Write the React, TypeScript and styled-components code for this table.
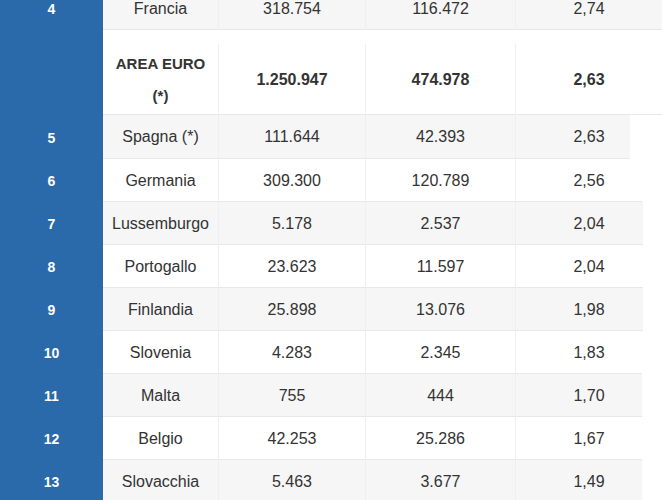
import React from 'react'
import styled, { createGlobalStyle } from 'styled-components'

const GlobalStyle = createGlobalStyle`
    html, body {
        margin: 0;
        padding: 0;
        background: #fff;
        overflow: hidden;
    }
    body {
        font-family: "Liberation Sans", Arial, sans-serif;
        color: #333;
    }
`

const Table = styled.div`
    width: 662px;
    height: 500px;
    overflow: hidden;
    display: flex;
    flex-direction: column;
`

const Inner = styled.div`
    margin-top: -13px;
    display: flex;
    flex-direction: column;
`

const Row = styled.div<{ $h: number; $stripe: boolean; $edge: number; $padTop?: number }>`
    display: grid;
    grid-template-columns: 103px 115px 147px 150px 1fr;
    height: ${(p) => p.$h}px;
    box-sizing: border-box;
    padding-top: ${(p) => p.$padTop || 0}px;
    background:
        linear-gradient(90deg, #e8e8e8 ${(p) => p.$edge}px, transparent ${(p) => p.$edge}px) bottom / 100% 1px no-repeat,
        linear-gradient(90deg, ${(p) => (p.$stripe ? '#f6f6f6' : '#fff')} ${(p) => p.$edge}px, #fff ${(p) => p.$edge}px);
`

const Rank = styled.div<{ $padTop?: number }>`
    background: #2a6aab;
    color: #fff;
    font-weight: bold;
    font-size: 14px;
    display: flex;
    align-items: center;
    justify-content: center;
    margin-top: ${(p) => -(p.$padTop || 0)}px;
    margin-bottom: -1px;
`

const Cell = styled.div<{ $line?: boolean; $bold?: boolean }>`
    display: flex;
    align-items: center;
    justify-content: center;
    text-align: center;
    font-size: 16px;
    font-weight: ${(p) => (p.$bold ? 'bold' : 'normal')};
    border-left: ${(p) => (p.$line ? '1px solid #efefef' : 'none')};
`

const AreaLabel = styled.div`
    font-size: 15px;
    font-weight: bold;
    line-height: 32px;
`

type Item = { rank: string; name: string; a: string; b: string; c: string; edge: number }

const rows: Item[] = [
    { rank: '5', name: 'Spagna (*)', a: '111.644', b: '42.393', c: '2,63', edge: 630 },
    { rank: '6', name: 'Germania', a: '309.300', b: '120.789', c: '2,56', edge: 642 },
    { rank: '7', name: 'Lussemburgo', a: '5.178', b: '2.537', c: '2,04', edge: 643 },
    { rank: '8', name: 'Portogallo', a: '23.623', b: '11.597', c: '2,04', edge: 643 },
    { rank: '9', name: 'Finlandia', a: '25.898', b: '13.076', c: '1,98', edge: 643 },
    { rank: '10', name: 'Slovenia', a: '4.283', b: '2.345', c: '1,83', edge: 642 },
    { rank: '11', name: 'Malta', a: '755', b: '444', c: '1,70', edge: 642 },
    { rank: '12', name: 'Belgio', a: '42.253', b: '25.286', c: '1,67', edge: 642 },
    { rank: '13', name: 'Slovacchia', a: '5.463', b: '3.677', c: '1,49', edge: 642 },
]

export default function App() {
    return (
        <>
            <GlobalStyle />
            <Table>
                <Inner>
                    <Row $h={43} $stripe $edge={662}>
                        <Rank>4</Rank>
                        <Cell>Francia</Cell>
                        <Cell $line>318.754</Cell>
                        <Cell $line>116.472</Cell>
                        <Cell $line>2,74</Cell>
                    </Row>
                    <Row $h={85} $stripe={false} $edge={662} $padTop={14}>
                        <Rank $padTop={14} />
                        <Cell>
                            <AreaLabel>
                                AREA EURO
                                <br />
                                (*)
                            </AreaLabel>
                        </Cell>
                        <Cell $line $bold>1.250.947</Cell>
                        <Cell $line $bold>474.978</Cell>
                        <Cell $line $bold>2,63</Cell>
                    </Row>
                    {rows.map((r, i) => (
                        <Row key={r.rank} $h={i === 0 ? 44 : 43} $stripe={i % 2 === 0} $edge={r.edge}>
                            <Rank>{r.rank}</Rank>
                            <Cell>{r.name}</Cell>
                            <Cell $line>{r.a}</Cell>
                            <Cell $line>{r.b}</Cell>
                            <Cell $line>{r.c}</Cell>
                        </Row>
                    ))}
                </Inner>
            </Table>
        </>
    )
}
